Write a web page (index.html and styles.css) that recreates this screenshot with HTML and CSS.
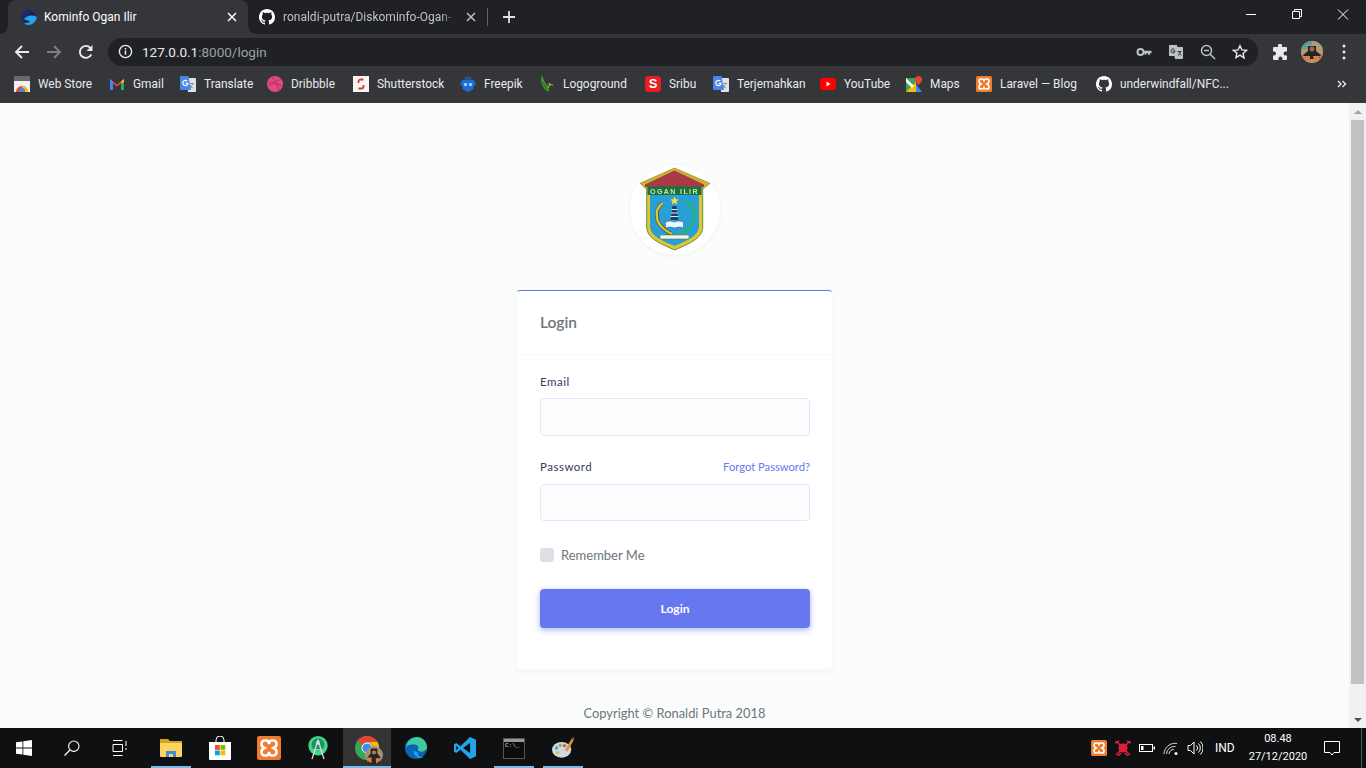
FILE: index.html
```html
<!DOCTYPE html>
<html lang="en">
<head>
<meta charset="utf-8">
<title>Kominfo Ogan Ilir</title>
<link rel="stylesheet" href="styles.css">
</head>
<body>
<svg class="defs" width="0" height="0">
  <symbol id="gh" viewBox="0 0 16 16"><path fill="#fff" d="M8 0C3.58 0 0 3.58 0 8c0 3.54 2.29 6.53 5.47 7.59.4.07.55-.17.55-.38 0-.19-.01-.82-.01-1.49-2.01.37-2.53-.49-2.69-.94-.09-.23-.48-.94-.82-1.13-.28-.15-.68-.52-.01-.53.63-.01 1.08.58 1.23.82.72 1.21 1.87.87 2.33.66.07-.52.28-.87.51-1.07-1.78-.2-3.64-.89-3.64-3.95 0-.87.31-1.59.82-2.15-.08-.2-.36-1.02.08-2.12 0 0 .67-.21 2.2.82.64-.18 1.32-.27 2-.27.68 0 1.36.09 2 .27 1.53-1.04 2.2-.82 2.2-.82.44 1.1.16 1.92.08 2.12.51.56.82 1.27.82 2.15 0 3.07-1.87 3.75-3.65 3.95.29.25.54.73.54 1.48 0 1.07-.01 1.93-.01 2.2 0 .21.15.46.55.38A8.013 8.013 0 0016 8c0-4.42-3.58-8-8-8z"/></symbol>
  <symbol id="xampp" viewBox="0 0 16 16"><rect width="16" height="16" rx="1.5" fill="#ee7d2e"/><path fill="none" stroke="#fff" stroke-width="1.7" d="M5 3h1.6c.8 0 1.4 1.6 1.4 2.5C8 4.600 8.600 3 9.400 3H11a2 2 0 0 1 2 2v.6C13 7 11 8 11 8s2 1 2 2.400V11a2 2 0 0 1-2 2H9.400C8.600 13 8 11.400 8 10.500 8 11.400 7.400 13 6.600 13H5a2 2 0 0 1-2-2v-.6C3 9 5 8 5 8S3 7 3 5.600V5a2 2 0 0 1 2-2z"/></symbol>
  <symbol id="gt" viewBox="0 0 16 16"><path fill="#dfe3e8" d="M7 2h8a1 1 0 0 1 1 1v12a1 1 0 0 1-1 1H8z"/><path fill="#8a8f96" d="M10 7h4v1h-1.200c-.2 1-.7 2-1.300 2.600l1.400 1.100-.5.7-1.500-1.200-1.700 1.300-.5-.7 1.700-1.300c-.4-.5-.7-1-.9-1.500h1c.2.4.4.700.6 1 .5-.5.800-1.200 1-2H10z"/><path fill="#4a86e8" d="M1 0h7.500L11 14H1a1 1 0 0 1-1-1V1a1 1 0 0 1 1-1z"/><path fill="none" stroke="#fff" stroke-width="1.200" d="M7.300 5.200A2.600 2.600 0 1 0 8 7.400H5.600"/></symbol>
</svg>

<header class="chrome">
  <div class="tabstrip">
    <div class="tab tab-active">
      <svg class="fav" viewBox="0 0 16 16"><circle cx="7.500" cy="8" r="7.500" fill="#1c2a6b"/><path fill="#2aa4e8" d="M3 10c3-3.500 8-4.500 13-2-1 4.500-4.500 8-8.500 8-2 0-3.500-.8-5-2 2 .5 5 0 6.500-1.500-1.500-1-4-1.500-6-2.500z"/><path fill="#202124" d="M9 3c2 0 4 1.500 5 3.500-2-1-4.500-1-6.500-.3C8 5 8.500 4 9 3z"/></svg>
      <span class="tab-title">Kominfo Ogan Ilir</span>
      <svg class="tab-x" viewBox="0 0 10 10"><path d="M1 1l8 8M9 1l-8 8" stroke="#fff" stroke-width="1.500"/></svg>
    </div>
    <div class="tab tab-second">
      <svg class="fav"><use href="#gh"/></svg>
      <span class="tab-title tab-fade">ronaldi-putra/Diskominfo-Ogan-</span>
      <svg class="tab-x" viewBox="0 0 10 10"><path d="M1 1l8 8M9 1l-8 8" stroke="#bdc1c6" stroke-width="1.500"/></svg>
    </div>
    <span class="tab-sep"></span>
    <svg class="tab-plus" viewBox="0 0 14 14"><path d="M7 1v12M1 7h12" stroke="#dfe1e5" stroke-width="1.800"/></svg>
    <div class="winctl">
      <svg viewBox="0 0 46 28"><path d="M18 14.500h10" stroke="#fff"/></svg>
      <svg viewBox="0 0 46 28"><path d="M18.500 11.500h7v7h-7zM20.500 11.500v-2h7v7h-2" fill="none" stroke="#fff"/></svg>
      <svg viewBox="0 0 46 28"><path d="M18 9.500l10 10M28 9.500l-10 10" stroke="#fff"/></svg>
    </div>
  </div>

  <div class="toolbar">
    <button class="tb"><svg viewBox="0 0 16 16"><path d="M15 8H2M8 2L2 8l6 6" fill="none" stroke="#e8eaed" stroke-width="1.900"/></svg></button>
    <button class="tb"><svg viewBox="0 0 16 16"><path d="M1 8h13M8 2l6 6-6 6" fill="none" stroke="#7e8083" stroke-width="1.900"/></svg></button>
    <button class="tb"><svg viewBox="0 0 16 16"><path d="M13.300 10.500A6 6 0 1 1 12.300 3.800" fill="none" stroke="#e8eaed" stroke-width="1.900"/><path d="M14.500 1v6h-6z" fill="#e8eaed"/></svg></button>
    <div class="omnibox">
      <svg class="info" viewBox="0 0 16 16"><circle cx="8" cy="8" r="6.500" fill="none" stroke="#e8eaed" stroke-width="1.500"/><path d="M7.200 7h1.600v4.500H7.200zM7.200 4.200h1.600v1.600H7.200z" fill="#e8eaed"/></svg>
      <span class="url"><b>127.0.0.1</b>:8000/login</span>
      <div class="omni-actions">
        <span class="oa"><svg viewBox="0 0 16 16"><circle cx="4.500" cy="8" r="3" fill="none" stroke="#bdc1c6" stroke-width="2"/><path d="M7 6.800h8.500v2.400H14v1.600h-2V9.200h-1.500v1.200h-2V9.200H7z" fill="#bdc1c6"/></svg></span>
        <span class="oa"><svg viewBox="0 0 16 16"><path fill="#bdc1c6" d="M1 1h8l.5 2H14a1 1 0 0 1 1 1v10a1 1 0 0 1-1 1H7l-.5-3H1z"/><path fill="none" stroke="#35363a" stroke-width="1" d="M6.500 5.500A2 2 0 1 0 7 7H4.800M9.500 7.500h4M11 7.500c.3 1.500 1 3 2.500 4M12.500 7.500c-.3 1.500-1 3-2.500 4"/></svg></span>
        <span class="oa"><svg viewBox="0 0 16 16"><circle cx="6.500" cy="6.500" r="5" fill="none" stroke="#bdc1c6" stroke-width="1.500"/><path d="M10.200 10.200L15 15M4 6.500h5" stroke="#bdc1c6" stroke-width="1.500"/></svg></span>
        <span class="oa"><svg viewBox="0 0 16 16"><path d="M8 1.700l1.900 4.200 4.600.5-3.400 3.100.9 4.500L8 11.200l-4 2.300.9-4.500L1.500 6.400l4.600-.5z" fill="none" stroke="#e8eaed" stroke-width="1.400"/></svg></span>
      </div>
    </div>
    <div class="tb-right">
      <button class="tb"><svg viewBox="0 0 16 16"><path fill="#e8eaed" d="M6 1.500a2 2 0 0 1 4 0V3h4a1 1 0 0 1 1 1v3.500h-1.500a2 2 0 0 0 0 4H15V15a1 1 0 0 1-1 1h-3.500v-1.500a2 2 0 0 0-4 0V16H2a1 1 0 0 1-1-1v-3.500h1a2 2 0 0 0 0-4H1V4a1 1 0 0 1 1-1h4z"/></svg></button>
      <button class="tb"><svg class="avatar" viewBox="0 0 22 22"><circle cx="11" cy="11" r="11" fill="#b89a72"/><path d="M0 8a11 11 0 0 1 11-8v4H7v4z" fill="#5f9c96"/><path d="M22 8a11 11 0 0 0-11-8v4h4v4z" fill="#a8a07c"/><path d="M7 5h8v5l5 4-2 4H4l-2-4 5-4z" fill="#2b2320"/><path d="M3 15h6v6.500a11 11 0 0 1-6-4zM12 15h7a11 11 0 0 1-5 6.800z" fill="#d9814b"/><circle cx="11" cy="8" r="2.500" fill="#9c6a4c"/></svg></button>
      <button class="tb"><svg viewBox="0 0 16 16"><path d="M8 2v.01M8 8v.01M8 14v.01" stroke="#e8eaed" stroke-width="3" stroke-linecap="round"/></svg></button>
    </div>
  </div>

  <nav class="bookmarks">
    <a class="bm"><svg viewBox="0 0 16 16"><rect x="0" y="2" width="16" height="14" fill="#f1f1f1"/><path d="M0 0h16v5H0z" fill="#6a6a6a"/><path d="M2 16a6 6 0 0 1 12 0z" fill="#ea4335"/><path d="M8 10a6 6 0 0 1 6 6H8z" fill="#fbbc05"/><circle cx="8" cy="15" r="3" fill="#4285f4"/></svg>Web Store</a>
    <a class="bm"><svg viewBox="0 0 16 16"><path d="M1 14V3l7 5.500L15 3v11h-3V7.500L8 10.500 4 7.500V14z" fill="#ea4335"/><path d="M1 14V3l3 2.500V14z" fill="#4285f4"/><path d="M15 14V3l-3 2.500V14z" fill="#34a853"/><path d="M12 5.500L15 3v3l-3 1.500z" fill="#fbbc04"/></svg>Gmail</a>
    <a class="bm"><svg><use href="#gt"/></svg>Translate</a>
    <a class="bm"><svg viewBox="0 0 16 16"><circle cx="8" cy="8" r="8" fill="#e04a86"/><path d="M5 1c3 3 6 8 7 14M1 6c4 1 9 0 13-3M1 10c4-3 9-3 14 0" fill="none" stroke="#b92e66"/></svg>Dribbble</a>
    <a class="bm"><svg viewBox="0 0 16 16"><rect width="16" height="16" fill="#f5f5f5"/><path d="M10.500 3.500H7.500a2 2 0 0 0-2 2V7M5.500 12.500h3a2 2 0 0 0 2-2V9" fill="none" stroke="#e8362c" stroke-width="1.800"/></svg>Shutterstock</a>
    <a class="bm"><svg viewBox="0 0 16 16"><path d="M8 0v4M5 1l1.500 3M11 1L9.500 4" stroke="#1a73e8"/><path d="M2.500 4h11l2.500 4-2.500 2v3L8 16l-5.500-3v-3L0 8z" fill="#1a6fd8"/><circle cx="5.500" cy="8.500" r="1.700" fill="#9cd0ff"/><circle cx="10.500" cy="8.500" r="1.700" fill="#9cd0ff"/></svg>Freepik</a>
    <a class="bm"><svg viewBox="0 0 16 16"><path d="M3 1c-1 5 1 11 6 14 1-2 0-4-2-6C5 7 4 4 3 1z" fill="#2f6f22" stroke="#3f9b2a" stroke-width="1.300"/><path d="M14 9c-2-1-4 0-5 3" fill="none" stroke="#7fb82f" stroke-width="1.300"/><circle cx="10.500" cy="8" r="1" fill="#e8a33a"/></svg>Logoground</a>
    <a class="bm"><span class="sribu">S</span>Sribu</a>
    <a class="bm"><svg><use href="#gt"/></svg>Terjemahkan</a>
    <a class="bm"><svg viewBox="0 0 16 16"><rect y="2" width="16" height="12" rx="3" fill="#f00"/><path d="M6.500 5.500v5L10.500 8z" fill="#fff"/></svg>YouTube</a>
    <a class="bm"><svg viewBox="0 0 16 16"><path d="M0 2h10v14H0z" fill="#34a853"/><path d="M0 16L10 6v10z" fill="#fbbc04"/><path d="M0 2l8 8-2 2L0 6z" fill="#fff"/><path d="M10 8l6 8h-6z" fill="#4285f4"/><path d="M12.500 0A3.500 3.500 0 0 1 16 3.500C16 6 12.500 9 12.500 9S9 6 9 3.500A3.500 3.500 0 0 1 12.500 0z" fill="#ea4335"/></svg>Maps</a>
    <a class="bm"><svg><use href="#xampp"/></svg>Laravel — Blog</a>
    <a class="bm"><svg><use href="#gh"/></svg>underwindfall/NFC...</a>
    <svg class="bm-more" viewBox="0 0 10 10"><path d="M1 2l3 3-3 3M5.500 2l3 3-3 3" fill="none" stroke="#e8eaed" stroke-width="1.400"/></svg>
  </nav>
</header>

<div class="viewport">
  <main class="page">
    <div class="crest-wrap">
      <svg class="crest" viewBox="0 0 90 90">
        <path d="M16.700 22h56v40c0 12-15 17-28 23-13-6-28-11-28-23z" fill="#e3c62e" stroke="#3d7a35" stroke-width=".8"/>
        <path d="M20 29h49v32c0 10-13 15-24.500 20C33 76 20 71 20 61z" fill="#2a9fd6"/>
        <path d="M44.500 3L80 18.300l-7 5.700H16l-6-5.700z" fill="#cdb42c" stroke="#6a6a22" stroke-width=".5"/>
        <path d="M44.500 5.500L74 19.500v2.500H15v-2.500z" fill="#a83a48"/>
        <rect x="17.500" y="21.500" width="54" height="8.500" fill="#17733f"/>
        <text x="44.500" y="28.500" class="crest-text" text-anchor="middle">OGAN ILIR</text>
        <path d="M44.500 31.500l1.200 2.800 3 .2-2.300 2 .8 3-2.700-1.600-2.700 1.600.8-3-2.300-2 3-.2z" fill="#f7e33a"/>
        <path d="M42.500 41h4l2 14h-8z" fill="#1d3f6e"/>
        <path d="M41.500 44.500h6M41 48h7M40.500 51.500h8" stroke="#dfeaf0" stroke-width="1"/>
        <path d="M35.500 57q4.500-2 9 0q4.500-2 9 0v6q-4.500-2-9 0q-4.500-2-9 0z" fill="#eef7fb" stroke="#1d5f8e" stroke-width=".5"/>
        <path d="M33 38c-5 3-7 9-6 15 1 7 8 13 15 16" fill="none" stroke="#3a4a2a" stroke-width="3.600"/>
        <path d="M33 38c-5 3-7 9-6 15 1 7 8 13 15 16" fill="none" stroke="#e0c62e" stroke-width="2.400"/>
        <path d="M56 37c6 3 9 9 8 15-1 7-7 13-14 17" fill="none" stroke="#22b868" stroke-width="3.500" stroke-dasharray="2.500 1"/>
        <rect x="30" y="70" width="29" height="4" rx="1" fill="#f2f2e2" stroke="#5a6a3a" stroke-width=".5"/>
      </svg>
    </div>

    <section class="card">
      <h4 class="card-head">Login</h4>
      <form class="card-body">
        <label class="lbl lbl-email">Email</label>
        <input class="field" type="email" aria-label="Email">
        <div class="pw-row">
          <label class="lbl">Password</label>
          <a class="forgot">Forgot Password?</a>
        </div>
        <input class="field field-pw" type="password" aria-label="Password">
        <div class="remember"><span class="check"></span><span class="remember-text">Remember Me</span></div>
        <button class="btn" type="button">Login</button>
      </form>
    </section>

    <p class="copy">Copyright © Ronaldi Putra 2018</p>
  </main>
  <div class="scrollbar">
    <div class="sb-btn"><span class="arrow-up"></span></div>
    <div class="sb-thumb"></div>
    <div class="sb-btn sb-btn-end"><span class="arrow-down"></span></div>
  </div>
</div>

<footer class="taskbar">
  <div class="tk"><svg viewBox="0 0 16 16"><path fill="#fff" d="M0 2.300l6.500-.9v6.200H0zM7.300 1.300L16 0v7.600H7.300zM0 8.400h6.500v6.200L0 13.700zM7.300 8.400H16V16l-8.700-1.200z"/></svg></div>
  <div class="tk tk-sys"><svg viewBox="0 0 16 16"><circle cx="9.800" cy="6.200" r="5.200" fill="none" stroke="#fff" stroke-width="1.100"/><path d="M6 10L.5 15.500" stroke="#fff" stroke-width="1.200"/></svg></div>
  <div class="tk tk-sys"><svg viewBox="0 0 16 16"><path d="M1 .5h9.500M1 15.500h9.500M1 4.500h9.500v7H1z M14 1v5M14 8v2" fill="none" stroke="#fff"/></svg></div>
  <div class="tk tk-open tk-gap"><svg class="ic-lg" viewBox="0 0 22 20"><path d="M0 1h8l2 2h12v4H0z" fill="#d9a21c"/><path d="M0 5h22v13a1 1 0 0 1-1 1H1a1 1 0 0 1-1-1z" fill="#fbd560"/><path d="M6 19v-6h10v6h-3v-3H9v3z" fill="#3f8fd3"/></svg></div>
  <div class="tk"><svg class="ic-lg" viewBox="0 0 22 24"><path d="M7 6V4a4 4 0 0 1 8 0v2" fill="none" stroke="#fff"/><path d="M0 6h22v17a1 1 0 0 1-1 1H1a1 1 0 0 1-1-1z" fill="#fff"/><rect x="6" y="9" width="4.800" height="4.800" fill="#f25022"/><rect x="11.500" y="9" width="4.800" height="4.800" fill="#7fba00"/><rect x="6" y="14.500" width="4.800" height="4.800" fill="#00a4ef"/><rect x="11.500" y="14.500" width="4.800" height="4.800" fill="#ffb900"/></svg></div>
  <div class="tk"><svg class="ic-lg ic-xampp"><use href="#xampp"/></svg></div>
  <div class="tk"><svg class="ic-lg" viewBox="0 0 22 26"><circle cx="11" cy="10.500" r="10.500" fill="#3ddc84"/><circle cx="11" cy="9.500" r="7" fill="#1f8f68"/><path d="M11 4L4.500 25M11 4l6.500 21" stroke="#d5dedb" stroke-width="1.400"/><circle cx="11" cy="7.500" r="2" fill="#d5dedb"/><path d="M6.500 15h9" stroke="#d5dedb" stroke-width="1.200"/></svg></div>
  <div class="tk tk-open tk-active">
    <svg class="ic-chrome" viewBox="0 0 24 24"><circle cx="12" cy="12" r="12" fill="#34a853"/><path d="M12 0a12 12 0 0 1 10.400 6H12a6 6 0 0 0-5.200 3L2.600 4.600A12 12 0 0 1 12 0z" fill="#ea4335"/><path d="M22.400 6A12 12 0 0 1 12 24l5.200-9A6 6 0 0 0 12 6z" fill="#fbbc05"/><circle cx="12" cy="12" r="5" fill="#4285f4" stroke="#fff"/></svg>
    <svg class="ic-badge" viewBox="0 0 22 22"><circle cx="11" cy="11" r="11" fill="#a39278"/><path d="M7 3h8v6l4 5-2 8H5l-2-8 4-5z" fill="#2b2320"/><path d="M3 14h5v7a11 11 0 0 1-5-4zM13 15h6a11 11 0 0 1-5 6.800z" fill="#d9814b"/><circle cx="11" cy="8" r="2.500" fill="#b27a58"/></svg>
  </div>
  <div class="tk"><svg class="ic-lg" viewBox="0 0 24 24"><circle cx="12" cy="12" r="12" fill="#0c63b4"/><path d="M1 11C2 4 8 0 13 0c6 0 11 5 11 11 0 3-3 5-6 5-2 0-4-1-4-3 1-1 1-2 0-3-2-3-9-3-13 1z" fill="#3ecb9f"/><path d="M9 15c0 4 3 8 8 8 1 0 2-.5 3-1-4 1-6-2-6-5-2-1-4-2-5-2z" fill="#1a9fe0"/></svg></div>
  <div class="tk"><svg class="ic-lg" viewBox="0 0 24 24"><path d="M17.500 0L24 3v18l-6.500 3L7 14l-4.500 3.500L0 16V8l2.500-1.500L7 10z" fill="#22a3ea"/><path d="M17.500 6.500v11L10 12z" fill="#0d0d0d"/><path d="M2.500 9.500v5L5 12z" fill="#0d0d0d"/></svg></div>
  <div class="tk tk-open"><div class="cmd"><span class="cmd-bar"></span><span class="cmd-text">C:\_</span></div></div>
  <div class="tk tk-open"><svg class="ic-lg" viewBox="0 0 24 24"><ellipse cx="10.500" cy="14" rx="10.500" ry="8.500" fill="#cfdbe4"/><circle cx="5" cy="12" r="1.800" fill="#3ea0dc"/><circle cx="9" cy="9" r="1.800" fill="#7fc142"/><circle cx="13.500" cy="9.500" r="1.800" fill="#e9503d"/><circle cx="6" cy="17" r="1.800" fill="#f3b43b"/><path d="M14 14L22 1l2 1.500L17 16z" fill="#d99a3f"/><path d="M21 3l2-3 1 .5-.5 3z" fill="#7f5a2a"/></svg></div>
  <div class="tray">
    <svg class="tr tr-x"><use href="#xampp"/></svg>
    <svg class="tr" viewBox="0 0 16 16"><circle cx="8" cy="8" r="4.500" fill="#e0203a"/><path d="M1 1l5 5M15 1l-5 5M1 15l5-5M15 15l-5-5M0 3l4-2M16 3l-4-2M3 16l3-3M13 16l-3-3" stroke="#e0203a" stroke-width="1.500"/></svg>
    <svg class="tr" viewBox="0 0 16 16"><rect x=".5" y="4.500" width="13" height="7" fill="none" stroke="#fff"/><rect x="2" y="6" width="2.500" height="4" fill="#fff"/><rect x="14.500" y="6.500" width="1.500" height="3" fill="#fff"/></svg>
    <svg class="tr" viewBox="0 0 16 16"><path d="M1 14a11 11 0 0 1 13-10.500M3.500 14a8 8 0 0 1 9-7.500M6 14a5 5 0 0 1 5-4.500" fill="none" stroke="#d6d6d6"/><circle cx="13" cy="13.500" r="1.500" fill="#fff"/></svg>
    <svg class="tr" viewBox="0 0 16 16"><path d="M1 5.500h2.500L7 2v12l-3.500-3.500H1zM9.500 5.500a3.500 3.500 0 0 1 0 5M11.500 3.500a6.500 6.500 0 0 1 0 9M13.500 1.500a9.500 9.500 0 0 1 0 13" fill="none" stroke="#fff"/></svg>
    <span class="lang">IND</span>
    <div class="clock"><span>08.48</span><span>27/12/2020</span></div>
    <svg class="notif" viewBox="0 0 16 16"><path d="M.5 1.500h15v11h-5.500L8 15l-2-2.500H.5z" fill="none" stroke="#fff"/></svg>
    <span class="show-desk"></span>
  </div>
</footer>
</body>
</html>
```

FILE: styles.css
```css
* { box-sizing: border-box; }
html, body { margin: 0; height: 100%; overflow: hidden; }
body { display: flex; flex-direction: column; width: 1366px; height: 768px; font-family: "Open Sans", "Liberation Sans", sans-serif; background: #fbfdfc; }
.defs { position: absolute; }

/* browser chrome */
.chrome { flex: none; height: 103px; background: #35363a; color: #e8eaed; display: flex; flex-direction: column; }
.tabstrip { height: 34px; background: #202124; display: flex; align-items: stretch; padding-left: 8px; }
.tab { width: 240px; display: flex; align-items: center; padding: 0 11px 0 13px; position: relative; font-family: "Roboto", sans-serif; font-size: 12px; color: #bdc1c6; }
.tab-active { background: #35363a; color: #fff; border-radius: 8px 8px 0 0; }
.tab-active::before, .tab-active::after { content: ""; position: absolute; bottom: 0; width: 8px; height: 8px; }
.tab-active::before { left: -8px; background: radial-gradient(circle at 0 0, #202124 7.5px, #35363a 8px); }
.tab-active::after { right: -8px; background: radial-gradient(circle at 100% 0, #202124 7.5px, #35363a 8px); }
.tab-second { width: 239px; padding-left: 11px; }
.tab-second .tab-title { margin-left: 1px; }
.fav { width: 16px; height: 16px; flex: none; margin-right: 7px; position: relative; z-index: 1; }
.tab-title { flex: 1; white-space: nowrap; overflow: hidden; line-height: 16px; }
.tab-fade { -webkit-mask-image: linear-gradient(90deg, #000 88%, transparent 97%); mask-image: linear-gradient(90deg, #000 88%, transparent 97%); }
.tab-x { width: 10px; height: 10px; flex: none; margin-left: 4px; }
.tab-sep { width: 1px; height: 18px; background: #5f6368; align-self: center; }
.tab-plus { width: 14px; height: 14px; align-self: center; margin-left: 14px; }
.winctl { margin-left: auto; display: flex; align-items: flex-start; }
.winctl svg { width: 46px; height: 28px; display: block; }

.toolbar { height: 35px; display: flex; align-items: center; padding-left: 6px; }
.tb { width: 32px; height: 32px; border: 0; background: none; padding: 0; display: flex; align-items: center; justify-content: center; }
.tb svg { width: 16px; height: 16px; display: block; }
.tb svg.avatar { width: 22px; height: 22px; }
.omnibox { width: 1150px; height: 28px; margin-left: 6px; background: #202124; border-radius: 14px; display: flex; align-items: center; padding-left: 10px; }
.info { width: 15px; height: 15px; flex: none; }
.url { margin-left: 9px; font-family: "Roboto", sans-serif; font-size: 13.500px; color: #9aa0a6; }
.url b { font-weight: 400; color: #e8eaed; }
.omni-actions { margin-left: auto; display: flex; padding-right: 2px; }
.oa { width: 32px; height: 28px; display: flex; align-items: center; justify-content: center; }
.oa svg { width: 16px; height: 16px; }
.tb-right { display: flex; margin-left: 6px; }

.bookmarks { height: 34px; display: grid; grid-template-columns: 95px 71px 87px 86px 107px 79px 106px 68px 107px 86px 70px 120px 222px 1fr; align-items: center; padding: 0 0 4px 14px; font-family: "Roboto", sans-serif; font-size: 11.900px; color: #e8eaed; }
.bm { display: flex; align-items: center; gap: 8px; white-space: nowrap; }
.bm svg { width: 16px; height: 16px; flex: none; }
.sribu { width: 16px; height: 16px; border-radius: 3px; background: #ea1c24; color: #fff; font: 700 13px/16px "Liberation Sans", sans-serif; text-align: center; flex: none; }
.bm-more { width: 10px; height: 10px; justify-self: end; margin-right: 19px; }

/* page */
.viewport { flex: none; height: 625px; display: flex; }
.page { width: 1349px; flex: none; display: flex; flex-direction: column; align-items: center; padding-top: 62px; background: #fbfdfc; }
.crest-wrap { width: 90px; height: 90px; border-radius: 50%; background: #fff; box-shadow: 0 1px 4px rgba(0, 0, 0, .05); }
.crest { width: 90px; height: 90px; display: block; filter: blur(.35px); }
.crest-text { font: 700 7px "Liberation Sans", sans-serif; fill: #d7e2a0; letter-spacing: 1.400px; }
.card { width: 315px; height: 379px; margin-top: 35px; background: #fff; border-top: 1px solid #6777ef; border-radius: 3px; box-shadow: 0 4px 8px rgba(0, 0, 0, .03); }
.card-head { margin: 0; height: 64px; padding: 0 23px 2px; display: flex; align-items: center; font: 600 15.500px "Lato", sans-serif; color: #6c757d; border-bottom: 1px solid #f9f9f9; }
.card-body { padding: 20px 22px 0 23px; display: flex; flex-direction: column; }
.lbl { font: 400 11.500px/14px "Lato", sans-serif; letter-spacing: .5px; color: #34395e; }
.field { display: block; width: 270px; height: 38px; margin-top: 9px; padding: 0 12px; background: #fdfdff; border: 1px solid #e4e6fc; border-radius: 4px; outline: none; }
.pw-row { display: flex; justify-content: space-between; align-items: center; margin-top: 24px; }
.forgot { font: 400 11.200px/14px "Lato", sans-serif; color: #6777ef; }
.field-pw { height: 37px; margin-top: 10px; }
.remember { display: flex; align-items: center; gap: 7px; margin-top: 27px; }
.check { width: 14px; height: 14px; background: #dde0e5; border-radius: 3px; }
.remember-text { font: 400 13px/14px "Lato", sans-serif; color: #6c757d; }
.btn { height: 39px; width: 270px; margin-top: 27px; padding: 0; background: #6777ef; border: 0; border-radius: 4px; color: #fff; font: 700 12px "Lato", sans-serif; box-shadow: 0 2px 6px #acb5f6; }
.copy { margin: 37px 0 0; font: 400 12.900px/14px "Lato", sans-serif; color: #6c757d; }

.scrollbar { flex: 1; display: flex; flex-direction: column; background: #f1f1f1; }
.sb-btn { height: 17px; display: flex; align-items: center; justify-content: center; }
.sb-btn-end { margin-top: auto; }
.arrow-up { border: 4px solid transparent; border-top: 0; border-bottom: 4px solid #a3a3a3; }
.arrow-down { border: 4px solid transparent; border-bottom: 0; border-top: 4px solid #505050; }
.sb-thumb { height: 564px; margin: 0 2px; background: #c1c1c1; }

/* taskbar */
.taskbar { flex: none; height: 40px; background: #0f1011; display: flex; }
.tk { width: 48px; height: 40px; display: flex; align-items: center; justify-content: center; position: relative; }
.tk + .tk { margin-left: 1px; }
.tk-sys.tk-sys { margin-left: 0; }
.tk-gap.tk-gap { margin-left: 3px; }
.tk svg { width: 16px; height: 16px; }
.tk .ic-lg { width: 22px; height: 24px; }
.tk .ic-xampp { width: 24px; height: 24px; }
.tk-open::after { content: ""; position: absolute; left: 4px; right: 4px; bottom: 0; height: 2px; background: #76b9ed; }
.tk-active { background: #333; }
.tk-active::after { left: 0; right: 0; }
.tk .ic-chrome { width: 24px; height: 24px; }
.tk .ic-badge { width: 18px; height: 18px; position: absolute; left: 22px; top: 18px; }
.cmd { width: 22px; height: 21px; background: #0c0c0c; border: 1px solid #555; font: 6px/7px "Liberation Mono", monospace; color: #ddd; display: flex; flex-direction: column; }
.cmd-bar { height: 3px; background: #999; flex: none; }
.cmd-text { padding-left: 1px; }
.tray { margin-left: auto; display: flex; align-items: center; color: #fff; }
.tr { width: 16px; height: 16px; margin-right: 8px; display: block; }
.tr-x { border-radius: 1px; }
.lang { font: 400 12px "Roboto", sans-serif; margin-left: 4px; width: 24px; }
.clock { width: 78px; display: flex; flex-direction: column; align-items: center; font: 400 11px/18px "Roboto", sans-serif; }
.notif { width: 16px; height: 16px; margin-left: 7px; }
.show-desk { width: 1px; height: 40px; background: #555; margin-left: 21px; margin-right: 4px; }
```
